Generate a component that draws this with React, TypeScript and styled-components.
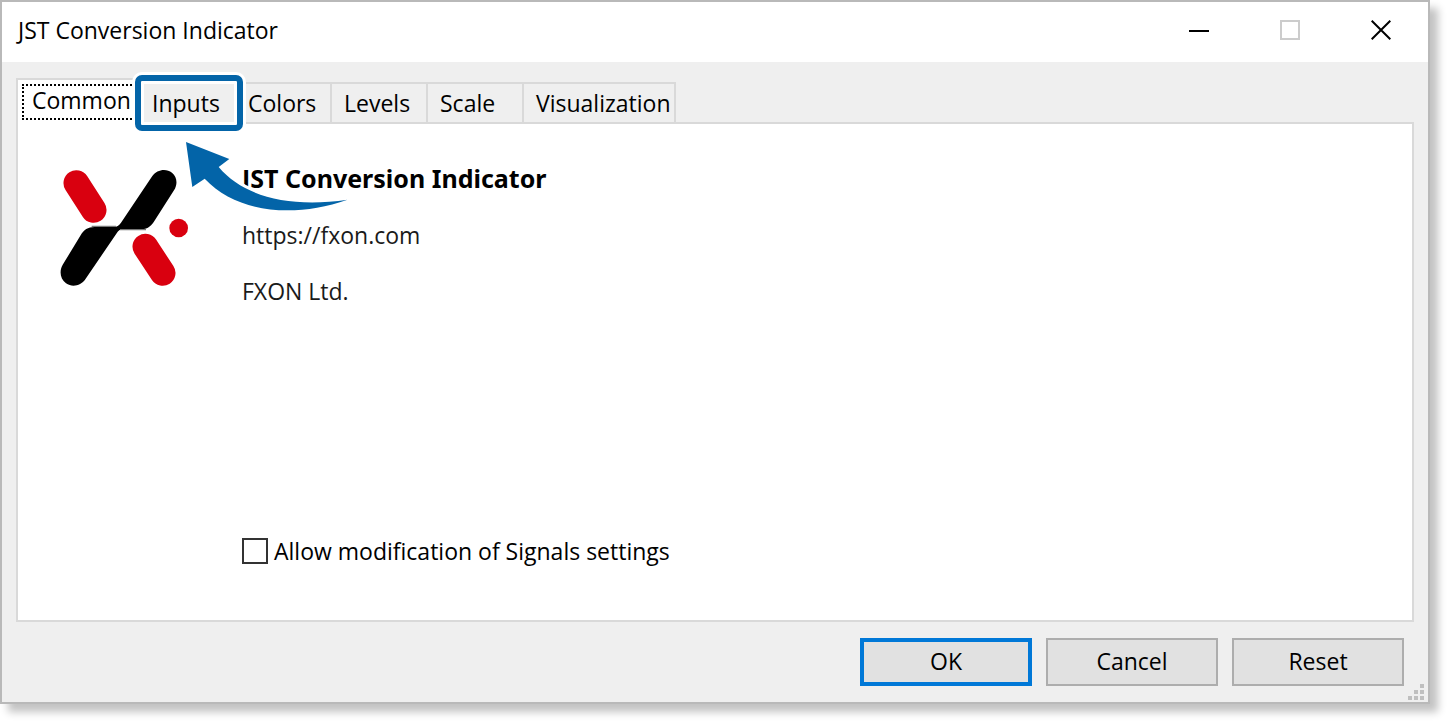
import React, { useState } from "react";
import styled, { createGlobalStyle } from "styled-components";

const GlobalStyle = createGlobalStyle`
  *, *::before, *::after { box-sizing: border-box; }
  body { margin: 0; background: #fff; }
  button, input { font: inherit; color: inherit; margin: 0; }
`;

const Dialog = styled.main`
  display: flex;
  flex-direction: column;
  min-height: calc(100vh - 20px);
  margin: 0 20px 20px 0;
  border: 2px solid #b9b9b9;
  background: #efefef;
  box-shadow: 8px 8px 8px rgba(0, 0, 0, 0.24);
  color: #000;
  font-family: "Open Sans", "Noto Sans", sans-serif;
  font-size: 23px;
  line-height: 32px;
`;

const TitleBar = styled.header`
  display: flex;
  align-items: center;
  justify-content: space-between;
  height: 60px;
  padding: 0 2px 4px 16px;
  background: #fff;
`;

const Title = styled.h1`
  margin: 0;
  font-size: 23px;
  font-weight: 400;
`;

const WindowControls = styled.div`
  display: flex;
`;

const WindowButton = styled.button`
  display: grid;
  place-items: center;
  width: 91px;
  height: 56px;
  padding: 0;
  border: 0;
  background: none;
`;

const Content = styled.div`
  display: flex;
  flex: 1;
  flex-direction: column;
  padding: 14px 14px 0;
`;

const TabList = styled.div`
  display: flex;
  align-items: flex-end;
  padding-top: 2px;
`;

const Tab = styled.button<{ $active?: boolean; $raised?: boolean; $width: number }>`
  position: relative;
  z-index: ${(p) => (p.$raised ? 1 : "auto")};
  flex: none;
  width: ${(p) => p.$width}px;
  height: ${(p) => (p.$active ? 46 : 40)}px;
  margin-bottom: ${(p) => (p.$active ? "-2px" : "0")};
  padding: ${(p) => (p.$active ? "0 0 4px 14px" : "0 0 0 12px")};
  border: solid #d9d9d9;
  border-width: ${(p) => (p.$active ? "2px 0 0 2px" : "2px 2px 0 0")};
  background: ${(p) => (p.$active ? "#fff" : "#efefef")};
  text-align: left;
  white-space: nowrap;
`;

const FocusFrame = styled.span`
  position: absolute;
  inset: 4px 0 4px 4px;
  border: 2px dotted #000;
`;

const Highlight = styled.span`
  position: absolute;
  inset: -9px -9px -9px -5px;
  border: 6px solid #0364a8;
  border-radius: 7px;
  box-shadow: 0 0 0 3px #fff, inset 0 0 0 3px #fff;
  pointer-events: none;
`;

const Panel = styled.section`
  display: flex;
  flex: 1;
  align-items: stretch;
  border: 2px solid #d9d9d9;
  background: #fff;
  padding: 37px 42px;
`;

const Logo = styled.svg`
  flex: none;
  width: 128px;
  height: 117px;
  margin: 8px 54px 0 0;
`;

const Details = styled.div`
  display: flex;
  flex: 1;
  flex-direction: column;
  align-items: flex-start;
  gap: 24px;
  position: relative;
`;

const ProductName = styled.h2`
  margin: 0;
  font-family: "Noto Sans", sans-serif;
  font-size: 25px;
  font-weight: 700;
  line-height: 34px;
`;

const Link = styled.a`
  color: #1a1a1a;
  text-decoration: none;
`;

const Company = styled.p`
  margin: 0;
  color: #1a1a1a;
`;

const Arrow = styled.svg`
  position: absolute;
  top: -23px;
  left: -60px;
  width: 170px;
  height: 80px;
  overflow: visible;
  pointer-events: none;
`;

const CheckLabel = styled.label`
  display: flex;
  align-items: center;
  gap: 6px;
  margin: auto 0 16px;
`;

const CheckBox = styled.input`
  appearance: none;
  width: 26px;
  height: 26px;
  border: 2px solid #333;
  background: #fff;
  &:checked { background: #333; box-shadow: inset 0 0 0 4px #fff; }
`;

const Footer = styled.footer`
  display: flex;
  justify-content: flex-end;
  gap: 14px;
  padding: 16px 24px;
  position: relative;
`;

const ActionButton = styled.button<{ $primary?: boolean }>`
  width: 172px;
  height: 48px;
  padding: 0 0 2px;
  border: ${(p) => (p.$primary ? "4px solid #0078d7" : "2px solid #adadad")};
  background: #e1e1e1;
`;

const Grip = styled.svg`
  position: absolute;
  right: 4px;
  bottom: 2px;
`;

const TABS = [
  { name: "Common", width: 124 },
  { name: "Inputs", width: 96 },
  { name: "Colors", width: 96 },
  { name: "Levels", width: 96 },
  { name: "Scale", width: 96 },
  { name: "Visualization", width: 152 },
];

const GRIP_DOTS = [[12, 0], [6, 6], [12, 6], [0, 12], [6, 12], [12, 12]];

export default function App() {
  const [allowed, setAllowed] = useState(false);
  return (
    <>
      <GlobalStyle />
      <Dialog>
        <TitleBar>
          <Title>JST Conversion Indicator</Title>
          <WindowControls>
            <WindowButton type="button" aria-label="Minimize">
              <svg width="20" height="20"><path d="M0 11h20" stroke="#000" strokeWidth="2" /></svg>
            </WindowButton>
            <WindowButton type="button" aria-label="Maximize" disabled>
              <svg width="20" height="20"><path d="M1 1h18v18H1z" fill="none" stroke="#ccc" strokeWidth="2" /></svg>
            </WindowButton>
            <WindowButton type="button" aria-label="Close">
              <svg width="20" height="20"><path d="M.7.7l18.6 18.6M19.3.7L.7 19.3" stroke="#000" strokeWidth="2" /></svg>
            </WindowButton>
          </WindowControls>
        </TitleBar>
        <Content>
          <TabList role="tablist">
            {TABS.map((tab, i) => (
              <Tab
                key={tab.name}
                type="button"
                role="tab"
                aria-selected={i === 0}
                $active={i === 0}
                $raised={tab.name === "Inputs"}
                $width={tab.width}
              >
                {tab.name}
                {i === 0 && <FocusFrame />}
                {tab.name === "Inputs" && <Highlight />}
              </Tab>
            ))}
          </TabList>
          <Panel role="tabpanel">
            <Logo viewBox="60 117 384 351" aria-hidden="true">
              <g stroke="#d9000f" strokeWidth="77" strokeLinecap="round">
                <path d="M109 159L161 240" />
                <path d="M316 350L368 429" />
              </g>
              <circle cx="416" cy="294" r="28" fill="#d9000f" />
              <path d="M337 138C350 119 378 114 396 128C411 140 414 162 402 181L345 270C335 286 325 297 305 298L246 298C240 298 236 301 229 311L136 448C123 467 97 473 78 460C60 447 57 422 69 403L121 317C132 299 143 291 164 291L222 291C231 290 236 287 243 278Z" />
              <path d="M155 289H228M240 299H318" stroke="#777" strokeWidth="4" />
            </Logo>
            <Details>
              <ProductName>JST Conversion Indicator</ProductName>
              <Link href="https://fxon.com">https://fxon.com</Link>
              <Company>FXON Ltd.</Company>
              <CheckLabel>
                <CheckBox type="checkbox" checked={allowed} onChange={(e) => setAllowed(e.target.checked)} />
                Allow modification of Signals settings
              </CheckLabel>
              <Arrow viewBox="182 138 170 80" aria-hidden="true">
                <path
                  d="M186 142L229.3 159L218.7 167C244 197 290 208 347.5 199.7C292 219 236 212 204.7 178.7L192.3 187Z"
                  fill="#0364a8"
                  stroke="#fff"
                  strokeWidth="6"
                  paintOrder="stroke"
                />
              </Arrow>
            </Details>
          </Panel>
        </Content>
        <Footer>
          <ActionButton type="button" $primary>OK</ActionButton>
          <ActionButton type="button">Cancel</ActionButton>
          <ActionButton type="button">Reset</ActionButton>
          <Grip width="16" height="16" aria-hidden="true">
            {GRIP_DOTS.map(([x, y]) => <rect key={`${x}-${y}`} x={x} y={y} width="4" height="4" fill="#bfbfbf" />)}
          </Grip>
        </Footer>
      </Dialog>
    </>
  );
}
